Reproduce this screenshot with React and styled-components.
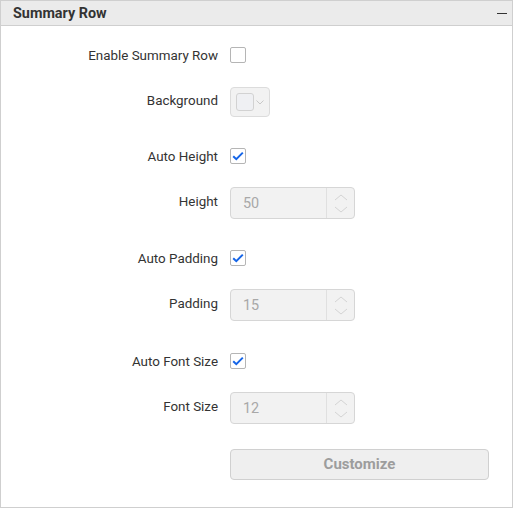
import styled, { createGlobalStyle } from "styled-components";

const GlobalStyle = createGlobalStyle`
  html, body {
    margin: 0;
    padding: 0;
    background: #fff;
  }
  body {
    font-family: Roboto, "Liberation Sans", sans-serif;
  }
`;

const Panel = styled.div`
  width: 513px;
  height: 508px;
  box-sizing: border-box;
  border: 1px solid #cfcfcf;
  background: #fff;
`;

const Header = styled.div`
  height: 24px;
  display: flex;
  align-items: center;
  justify-content: space-between;
  padding: 0 5px 0 12px;
  background: #ebebeb;
  border-bottom: 1px solid #cfcfcf;
`;

const Title = styled.span`
  font-size: 14.4px;
  font-weight: 700;
  color: #333;
`;

const Collapse = styled.span`
  width: 10px;
  height: 1.5px;
  margin-top: 1px;
  background: #333;
`;

const Body = styled.div`
  padding-top: 13px;
`;

const Row = styled.div`
  display: grid;
  grid-template-columns: 217px auto;
  column-gap: 12px;
  align-items: center;
  height: 32px;
  margin-top: ${(p) => p.$gap || 0}px;
`;

const Label = styled.span`
  text-align: right;
  font-size: 13.4px;
  color: #333;
  padding-bottom: ${(p) => (p.$raised ? 4 : 0)}px;
`;

const Box = styled.span`
  width: 16px;
  height: 16px;
  box-sizing: border-box;
  border: 1px solid #b5b5b5;
  border-radius: 2px;
  background: #fff;
  display: flex;
  align-items: center;
  justify-content: center;
`;

const Picker = styled.div`
  width: 40px;
  height: 30px;
  box-sizing: border-box;
  border: 1px solid #dcdcdc;
  border-radius: 4px;
  background: #f2f2f2;
  display: flex;
  align-items: center;
  padding-left: 5px;
  gap: 2px;
`;

const Swatch = styled.span`
  width: 18px;
  height: 18px;
  box-sizing: border-box;
  border: 1px solid #d2d2d2;
  border-radius: 3px;
  background: #eff0f3;
`;

const NumberBox = styled.div`
  width: 125px;
  height: 32px;
  box-sizing: border-box;
  border: 1px solid #d6d6d6;
  border-radius: 4px;
  background: #f2f2f2;
  display: flex;
`;

const Value = styled.span`
  flex: 1;
  display: flex;
  align-items: center;
  padding-left: 12px;
  padding-top: 1px;
  font-size: 14.4px;
  color: #a8a8a8;
`;

const Spinner = styled.div`
  width: 27px;
  border-left: 1px solid #e0e0e0;
  display: flex;
  flex-direction: column;
  align-items: center;
  justify-content: center;
  gap: 5px;
`;

const Button = styled.button`
  width: 259px;
  height: 31px;
  box-sizing: border-box;
  border: 1px solid #d0d0d0;
  border-radius: 4px;
  background: #efefef;
  color: #9d9d9d;
  font-family: Roboto, "Liberation Sans", sans-serif;
  font-size: 15px;
  font-weight: 700;
  padding: 0;
`;

function Checkbox({ checked }) {
  return (
    <Box>
      {checked && (
        <svg width="12" height="10" viewBox="0 0 12 10">
          <path d="M1.2 5.2 L4.3 8.2 L10.8 1.6" fill="none" stroke="#1565e8" strokeWidth="2" />
        </svg>
      )}
    </Box>
  );
}

function Chevron({ up }) {
  return (
    <svg width="14" height="7" viewBox="0 0 14 7">
      <path d={up ? "M1 6 L7 1 L13 6" : "M1 1 L7 6 L13 1"} fill="none" stroke="#d4d4d4" strokeWidth="1" />
    </svg>
  );
}

function NumberInput({ value }) {
  return (
    <NumberBox>
      <Value>{value}</Value>
      <Spinner>
        <Chevron up />
        <Chevron />
      </Spinner>
    </NumberBox>
  );
}

export default function App() {
  return (
    <>
      <GlobalStyle />
      <Panel>
        <Header>
          <Title>Summary Row</Title>
          <Collapse />
        </Header>
        <Body>
          <Row>
            <Label>Enable Summary Row</Label>
            <Checkbox />
          </Row>
          <Row $gap={15}>
            <Label $raised>Background</Label>
            <Picker>
              <Swatch />
              <svg width="8" height="5" viewBox="0 0 8 5">
                <path d="M0.5 0.5 L4 4 L7.5 0.5" fill="none" stroke="#c8c8c8" strokeWidth="1" />
              </svg>
            </Picker>
          </Row>
          <Row $gap={22}>
            <Label>Auto Height</Label>
            <Checkbox checked />
          </Row>
          <Row $gap={15}>
            <Label $raised>Height</Label>
            <NumberInput value="50" />
          </Row>
          <Row $gap={23}>
            <Label>Auto Padding</Label>
            <Checkbox checked />
          </Row>
          <Row $gap={15}>
            <Label $raised>Padding</Label>
            <NumberInput value="15" />
          </Row>
          <Row $gap={24}>
            <Label>Auto Font Size</Label>
            <Checkbox checked />
          </Row>
          <Row $gap={15}>
            <Label $raised>Font Size</Label>
            <NumberInput value="12" />
          </Row>
          <Row $gap={24}>
            <span />
            <Button>Customize</Button>
          </Row>
        </Body>
      </Panel>
    </>
  );
}
